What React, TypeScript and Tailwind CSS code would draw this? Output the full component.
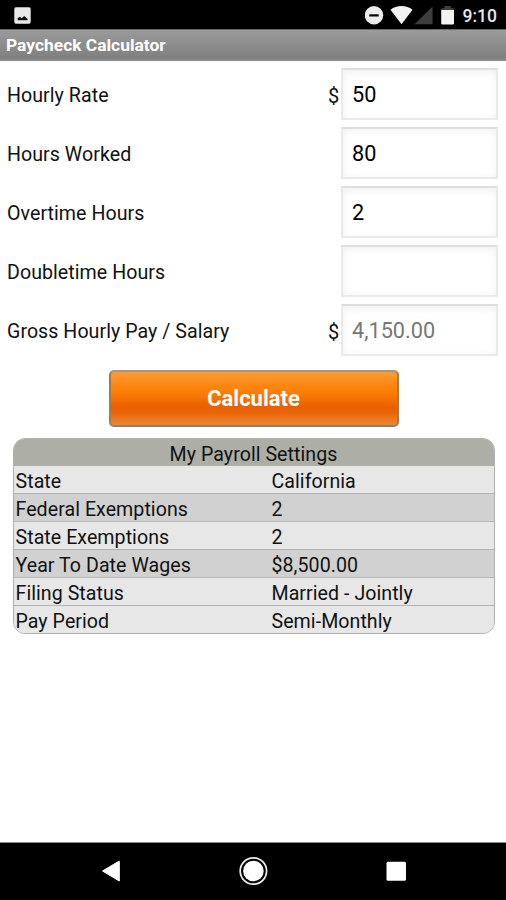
import React from "react";

type Field = { label: string; value: string; currency?: boolean; muted?: boolean };

const fields: Field[] = [
  { label: "Hourly Rate", value: "50", currency: true },
  { label: "Hours Worked", value: "80" },
  { label: "Overtime Hours", value: "2" },
  { label: "Doubletime Hours", value: "" },
  { label: "Gross Hourly Pay / Salary", value: "4,150.00", currency: true, muted: true },
];

const settings = [
  { label: "State", value: "California", dark: false },
  { label: "Federal Exemptions", value: "2", dark: true },
  { label: "State Exemptions", value: "2", dark: false },
  { label: "Year To Date Wages", value: "$8,500.00", dark: true },
  { label: "Filing Status", value: "Married - Jointly", dark: false },
  { label: "Pay Period", value: "Semi-Monthly", dark: false },
];

function StatusBar() {
  return (
    <header className="flex h-[29px] items-start bg-black pl-[14px] pr-[9px] pt-[5px]">
      <svg className="mt-[2px] h-[17px] w-[17px]" viewBox="0 0 17 17">
        <rect x="0.3" y="0.3" width="16.4" height="16.4" rx="1.6" fill="#e9e9e9" />
        <path d="M3.6 13.2 V11.2 L5.9 9.7 L7.8 11.3 L10.2 8.9 L13.6 12 V13.2 Z" fill="#111" />
      </svg>
      <div className="ml-auto flex items-start">
        <svg className="h-[21px] w-[95px]" viewBox="0 0 95 21">
          <circle cx="9" cy="10.3" r="9.2" fill="#ececec" />
          <rect x="4.3" y="9.3" width="9.4" height="2.2" fill="#000" />
          <path d="M25.5 4.7 C31.5 -0.1 41.5 -0.1 47.5 4.7 L36.5 19.2 Z" fill="#f2f2f2" />
          <path d="M49.5 19.3 L67.5 1.5 V19.3 Z" fill="#3c3c3c" />
          <path d="M76.2 5 V3.3 H79.5 V1 H85.8 V3.3 H89 V5 Z" fill="#414141" />
          <path d="M76.2 5 H89 V18.3 Q89 19.5 87.8 19.5 H77.4 Q76.2 19.5 76.2 18.3 Z" fill="#f2f2f2" />
        </svg>
        <span className="ml-[3px] text-[17.5px] leading-[22px] font-medium text-[#e8e8e8]">9:10</span>
      </div>
    </header>
  );
}

function FieldRow({ field }: { field: Field }) {
  return (
    <label className="flex h-[52px] items-center pl-[7px] pr-2">
      <span className="flex-1 pt-[4px] text-[19.6px] tracking-[0.05px]">{field.label}</span>
      <span className="w-[13px] pt-[3px] text-[20px]">{field.currency ? "$" : ""}</span>
      <span
        className={`flex h-full w-[157px] items-center border-2 border-t-[#dedede] border-x-[#e9e9e9] border-b-[#ebebeb] bg-white pl-[9px] pt-[3px] text-[21.7px] shadow-[inset_0_2px_8px_rgba(0,0,0,0.06)] ${field.muted ? "text-[#777]" : "text-black"}`}
      >
        {field.value}
      </span>
    </label>
  );
}

export default function App() {
  return (
    <div className="flex h-[900px] w-[506px] flex-col overflow-hidden bg-white font-[Roboto,sans-serif] text-[#111]">
      <StatusBar />
      <div className="flex h-8 items-center border-t border-b-2 border-t-[#666] border-b-[#8a8a8a] bg-linear-to-b from-[#9b9b9b] to-[#7f7f7f] pl-[6px] pt-[2px] text-[17.4px] font-bold text-white">
        Paycheck Calculator
      </div>
      <main className="flex flex-1 flex-col">
        <div className="flex flex-col gap-[7px] pt-[7px]">
          {fields.map((f) => (
            <FieldRow key={f.label} field={f} />
          ))}
        </div>
        <button className="ml-[108.5px] mt-[14px] h-[57px] w-[290px] rounded-[5px] border-2 border-t-[#a7987c] border-x-[#a97945] border-b-[#8f8069] bg-[linear-gradient(to_bottom,#ff9b33_0%,#fd8a16_22%,#f97b04_42%,#e95f00_66%,#e86505_76%,#ee8632_100%)] text-[22px] font-bold text-white">
          Calculate
        </button>
        <section className="ml-[12.5px] mt-[11px] flex h-[196px] w-[482px] flex-col overflow-hidden rounded-[12px] border border-[#b0b0ae] bg-[#e6e6e6] text-[19.6px] tracking-[0.05px]">
          <h2 className="flex h-[27px] items-center justify-center bg-[#adaea6] pt-[5px]">
            My Payroll Settings
          </h2>
          {settings.map((s) => (
            <div
              key={s.label}
              className={`flex h-7 items-center border-b border-[#b3b3b3] pl-[2px] pt-[4px] last:border-b-0 ${s.dark ? "bg-[#d1d1d1]" : "bg-[#e7e7e7]"}`}
            >
              <span className="w-64">{s.label}</span>
              <span>{s.value}</span>
            </div>
          ))}
        </section>
      </main>
      <nav className="flex h-[58px] items-center border-t border-[#888] bg-black">
        <svg className="h-[57px] w-[506px]" viewBox="0 0 506 57">
          <path d="M102.5 28 L119.3 18 V38 Z" fill="#fff" stroke="#fff" strokeWidth="1" strokeLinejoin="round" />
          <circle cx="253.4" cy="28" r="13.2" fill="none" stroke="#eee" strokeWidth="1.7" />
          <circle cx="253.4" cy="28" r="10.3" fill="#fff" />
          <rect x="386.5" y="18.8" width="19.5" height="19" rx="1.5" fill="#fff" />
        </svg>
      </nav>
    </div>
  );
}
